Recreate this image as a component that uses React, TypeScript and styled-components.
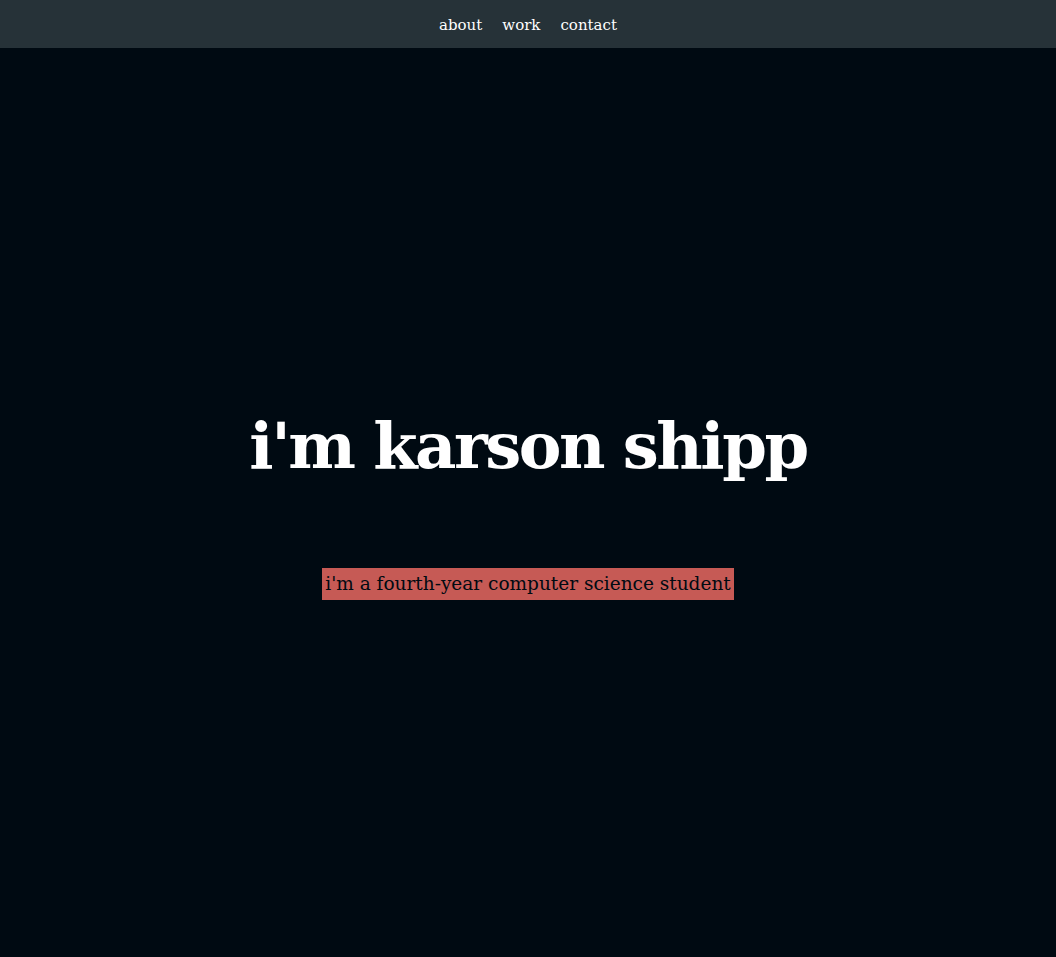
import React from "react";
import styled, { createGlobalStyle } from "styled-components";

const Global = createGlobalStyle`
  html, body { margin: 0; padding: 0; background: #000a12; }
  body { font-family: "Roboto Slab", "DejaVu Serif", serif; }
`;

const Page = styled.div`
  min-height: 957px;
  display: flex;
  flex-direction: column;
  background: #000a12;
`;

const Nav = styled.nav`
  height: 48px;
  background: #263238;
  display: flex;
  justify-content: center;
  align-items: center;
  gap: 20px;
  padding-top: 2px;
  box-sizing: border-box;
`;

const NavLink = styled.a`
  color: #ffffff;
  font-size: 15px;
  text-decoration: none;
  line-height: 1;
`;

const Hero = styled.main`
  flex: 1;
  display: flex;
  flex-direction: column;
  align-items: center;
  justify-content: center;
  padding-top: 8px;
`;

const Title = styled.h1`
  margin: 0;
  color: #ffffff;
  font-size: 64px;
  font-weight: 700;
  line-height: 1;
  letter-spacing: -2.5px;
`;

const Subtitle = styled.p`
  margin: 90px 0 0;
  background: #c65a55;
  color: #000a12;
  font-size: 18.5px;
  padding: 4px 3px;
  line-height: 24px;
`;

export default function App() {
  return (
    <Page>
      <Global />
      <Nav>
        <NavLink href="#about">about</NavLink>
        <NavLink href="#work">work</NavLink>
        <NavLink href="#contact">contact</NavLink>
      </Nav>
      <Hero>
        <Title>i'm karson shipp</Title>
        <Subtitle>i'm a fourth-year computer science student</Subtitle>
      </Hero>
    </Page>
  );
}
